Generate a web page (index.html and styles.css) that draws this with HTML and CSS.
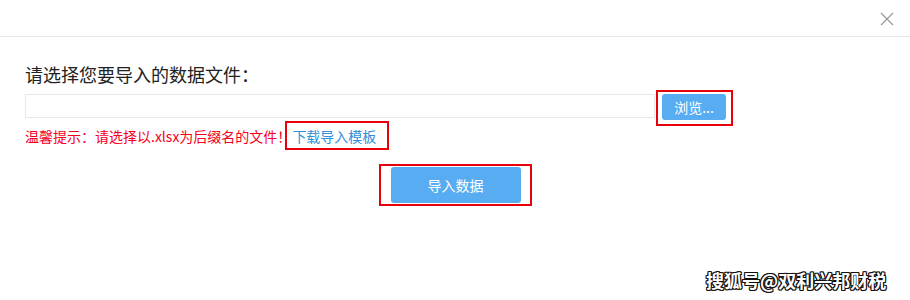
FILE: index.html
```html
<!DOCTYPE html>
<html lang="zh-CN">
<head>
<meta charset="utf-8">
<title>导入数据</title>
<link rel="stylesheet" href="styles.css">
</head>
<body>
<div class="dialog">
  <div class="header">
    <svg class="close" width="14" height="14" viewBox="0 0 14 14"><path d="M1 1L13 13M13 1L1 13" stroke="#9a9a9a" stroke-width="1.2" fill="none"/></svg>
  </div>
  <div class="content">
    <div class="title">请选择您要导入的数据文件：</div>
    <div class="file-row">
      <div class="file-input"></div>
      <div class="mark mark-browse"><button class="btn btn-browse">浏览...</button></div>
    </div>
    <div class="hint-row">
      <span class="hint">温馨提示：请选择以.xlsx为后缀名的文件！</span>
      <span class="mark mark-link"><a class="link">下载导入模板</a></span>
    </div>
    <div class="submit-row">
      <div class="mark mark-submit"><button class="btn btn-submit">导入数据</button></div>
    </div>
  </div>
  <div class="watermark">搜狐号@双利兴邦财税</div>
</div>
</body>
</html>
```
FILE: styles.css
```css
html, body {
  margin: 0;
  padding: 0;
  background: #fff;
}
body {
  font-family: "Noto Sans CJK SC", "Liberation Sans", sans-serif;
  width: 910px;
  height: 300px;
  overflow: hidden;
}
.dialog {
  position: relative;
  width: 910px;
  height: 300px;
}
.header {
  height: 37px;
  border-bottom: 1px solid #e8e8e8;
  display: flex;
  justify-content: flex-end;
  align-items: center;
  padding-right: 16px;
  box-sizing: border-box;
}
.close {
  display: block;
  margin-top: 1px;
}
.content {
  padding: 0 25px;
}
.title {
  margin-top: 25px;
  font-size: 18px;
  line-height: 24px;
  color: #222;
}
.file-row {
  margin-top: 8px;
  display: flex;
  align-items: flex-start;
}
.file-input {
  width: 630px;
  height: 24px;
  box-sizing: border-box;
  border: 1px solid #e9e9e9;
}
.mark {
  border: 2px solid #e8000b;
  box-sizing: border-box;
}
.mark-browse {
  margin: -4px 0 -8px 1px;
  width: 77px;
  height: 36px;
  padding: 2px 5px 4px 4px;
}
.btn {
  border: none;
  border-radius: 3px;
  background: #58adf2;
  color: #fff;
  font-family: "Noto Sans CJK SC", "Liberation Sans", sans-serif;
  font-size: 14px;
  padding: 0;
  display: block;
}
.btn-browse {
  width: 64px;
  height: 26px;
  line-height: 26px;
}
.hint-row {
  margin-top: 3px;
  display: flex;
  align-items: center;
  height: 29px;
}
.hint {
  font-size: 14px;
  line-height: 20px;
  color: #f5001c;
}
.mark-link {
  height: 29px;
  padding: 0 11px 0 5px;
  margin-left: -6px;
  display: flex;
  align-items: center;
}
.link {
  font-size: 14px;
  line-height: 20px;
  color: #2e90d9;
}
.submit-row {
  margin-top: 14px;
  display: flex;
  justify-content: center;
}
.mark-submit {
  width: 153px;
  height: 42px;
  padding: 1px 9px 1px 10px;
}
.btn-submit {
  width: 130px;
  height: 36px;
  line-height: 36px;
}
.watermark {
  position: absolute;
  left: 706px;
  top: 268px;
  font-size: 18px;
  line-height: 24px;
  font-weight: bold;
  color: #fff;
  text-shadow: 1px 1px 0 #111, -1px -1px 0 #111, 1px -1px 0 #111, -1px 1px 0 #111, 0 1px 0 #111, 0 -1px 0 #111, 1px 0 0 #111, -1px 0 0 #111;
}
```
